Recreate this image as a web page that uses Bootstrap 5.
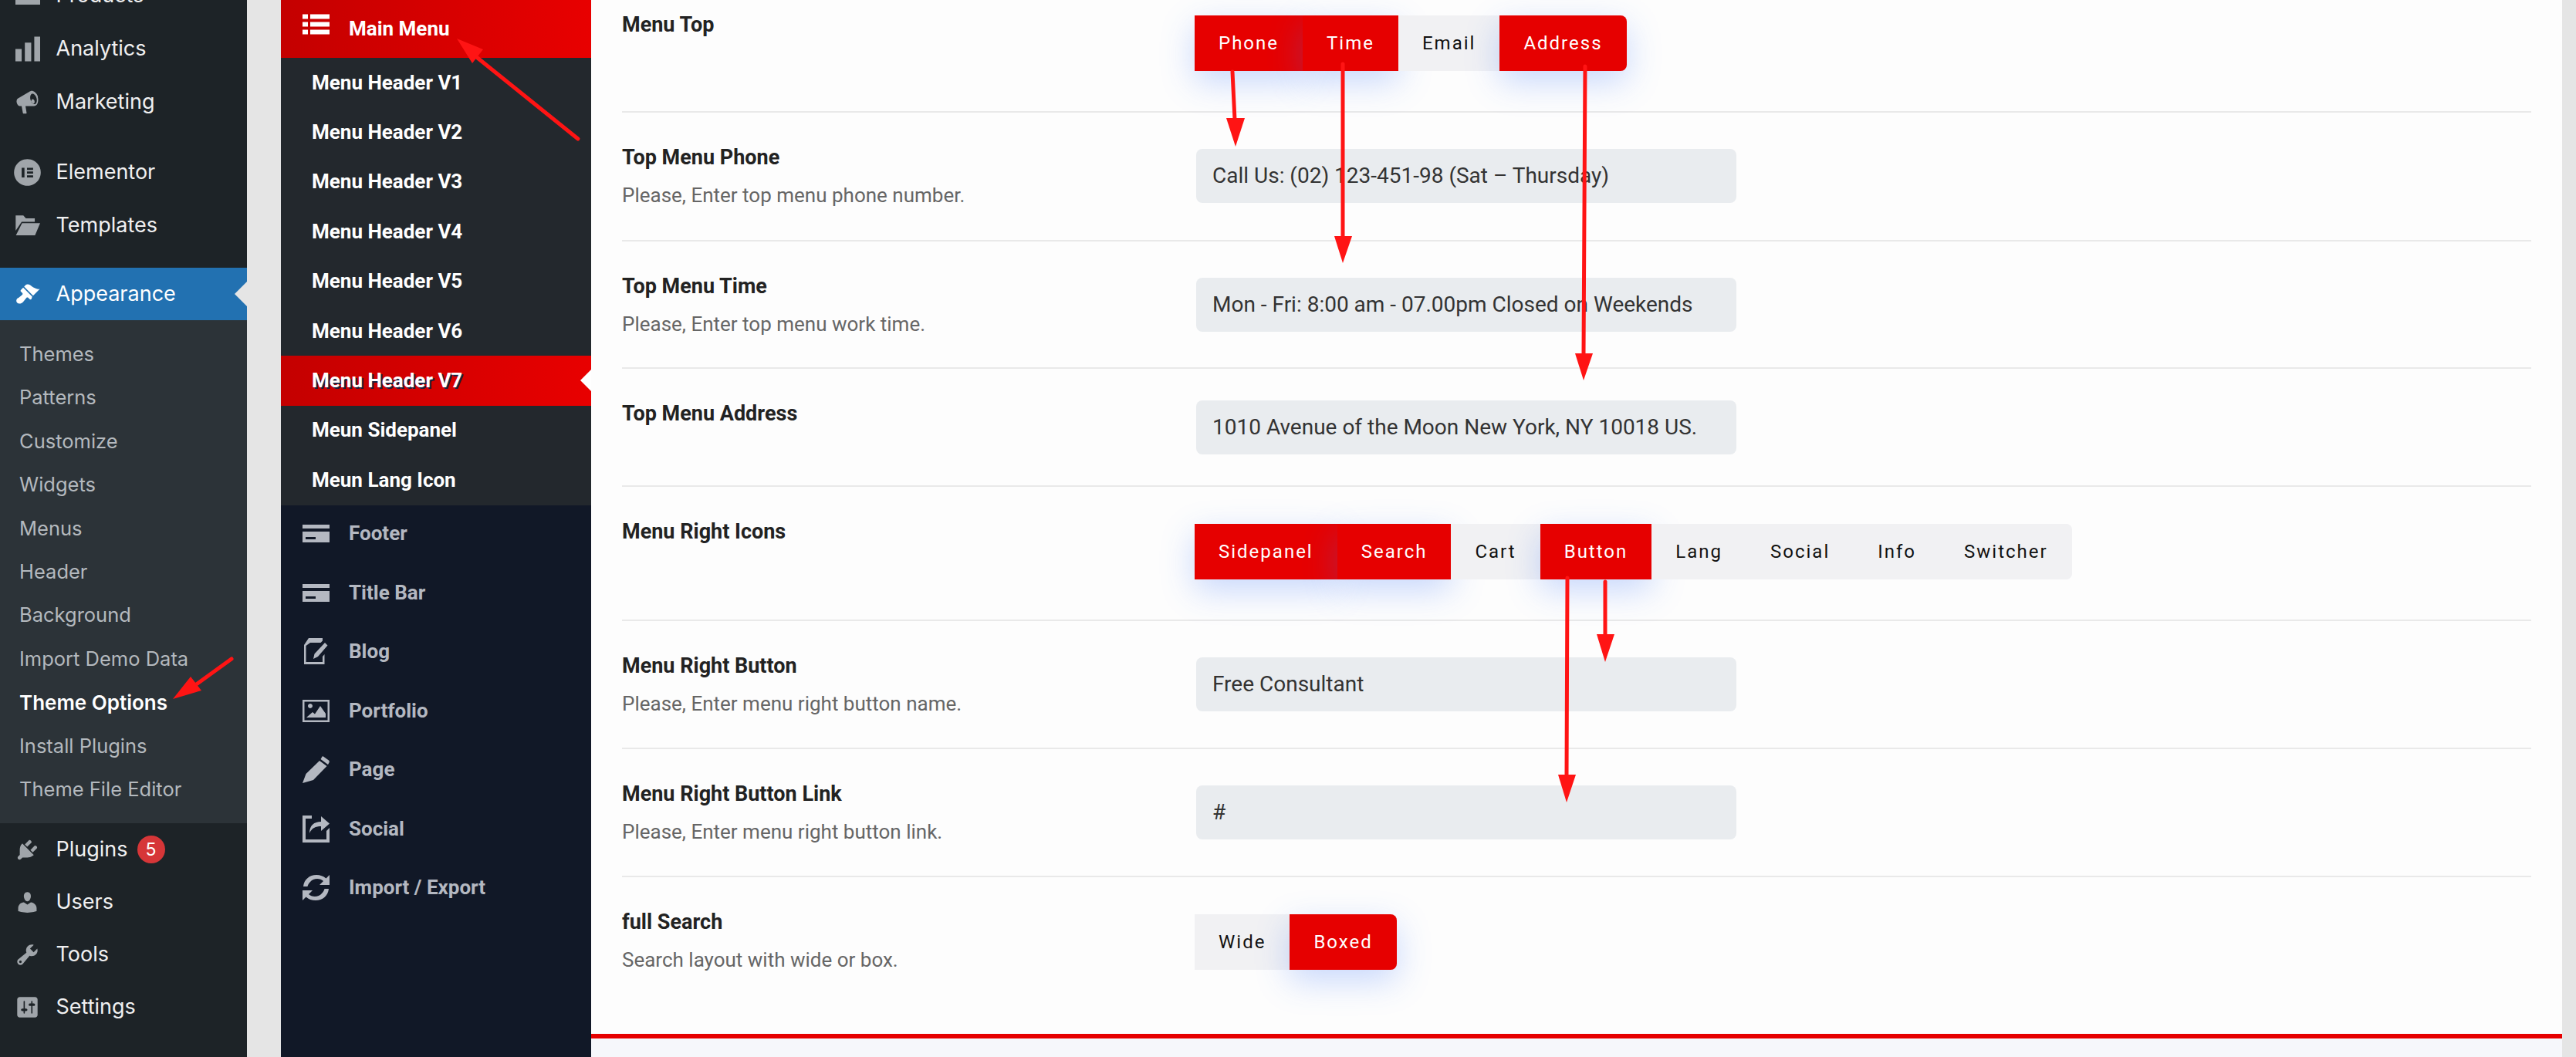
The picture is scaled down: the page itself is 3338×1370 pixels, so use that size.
<!DOCTYPE html>
<html lang="en">
<head>
<meta charset="utf-8">
<title>Theme Options</title>
<link href="https://cdn.jsdelivr.net/npm/bootstrap@5.3.0/dist/css/bootstrap.min.css" rel="stylesheet">
<style>
html,body{height:1370px;overflow:hidden;margin:0}
body{background:#e5e5e5;font-family:Roboto,"Liberation Sans",sans-serif;position:relative}
.shell{height:1370px;overflow:hidden}
.wp-side{width:320px;background:#1d2327;flex:none;font-family:Inter,"Liberation Sans",sans-serif}
.wp-list{margin-top:-40px}
.wp-item{height:69px;padding-left:19px;color:#f0f0f1;font-size:27px;white-space:nowrap;position:relative}
.wp-low{height:68px}
.wp-item svg{width:33px;height:33px;margin-right:20.500px;flex:none;fill:#a0a5aa;overflow:visible}
.sep-a{margin-top:22px}
.sep-b{margin-top:20px}
.wp-cur{background:#2271b1;color:#fff;height:68px}
.wp-cur svg{fill:#fff}
.wp-cur::after{content:"";position:absolute;right:0;top:18px;border:16px solid transparent;border-right-color:#e5e5e5;border-left:0}
.wp-sub{background:#2c3338;padding:16px 0 16px}
.wp-sub div{height:56.4px;padding-left:25px;font-size:25.500px;color:#b4b9be;display:flex;align-items:center}
.wp-sub .sub-on{color:#fff;font-weight:600;font-size:26px}
.wp-count{width:36px;height:36px;border-radius:50%;background:#d63638;color:#fff;font-size:23px;margin-left:12px}
.pn{width:402px;margin-left:44px;background:#111827;flex:none}
.pn-main{height:75px;padding-left:28px;color:#fff;font-weight:700;font-size:26px;background:linear-gradient(90deg,#c40000,#e80000)}
.pn-main svg{margin-bottom:12px}
.pn svg{width:35px;height:35px;margin-right:25px;flex:none}
.pn-sub{background:#23282d}
.pn-sub div{height:64.4px;padding-left:40px;color:#fff;font-weight:700;font-size:26px;display:flex;align-items:center;position:relative}
.pn-sub .pn-on{background:linear-gradient(90deg,#c40000,#e80000);text-shadow:2px 2px 0 #1a2340}
.pn-on::after{content:"";position:absolute;right:0;top:18px;border:14px solid transparent;border-right-color:#fff;border-left:0}
.pn-row{height:76.5px;padding:0 0 2px 28px;color:#b4b8c1;font-weight:700;font-size:26px}
.pn-row svg{fill:#b4b8c1}
.main{width:2554px;background:#f6f7fb;flex:none;height:1370px}
.sheet{background:#fdfdfd;padding:0 40px;margin-top:-26px}
.foot-line{height:6px;background:#e60000}
.opt{border-bottom:2px solid #e9e9e9}
.opt:last-child{border-bottom:0}
.opt-label{width:742px;flex:none;padding-top:35px}
.opt-label h6{font-family:Roboto,sans-serif;font-size:27px;font-weight:700;color:#222;line-height:34px;margin:6px 0 0}
.opt-label p{font-size:26px;color:#666;line-height:32px;margin:15.500px 0 0}
.pad-a{height:172px}
.pad-b{height:167px}
.pad-c{height:165px}
.pad-d{height:153px}
.pad-e{height:174px}
.pad-f{height:166px}
.pad-g{height:203px}
.field{width:700px;height:70px;margin:47px 0 0 2px;background:#e9ecef;border:0;border-radius:8px;padding:0 21px;font-size:28px;color:#333;display:flex;align-items:center;white-space:nowrap;overflow:hidden}
.field-up{margin-top:41px}
.seg{margin-top:48px;height:72px;background:#f1f1f3;border-radius:0 8px 8px 0}
.seg-top{margin-top:46px}
.seg .btn{border:0;border-radius:0;height:72px;padding:0 31px;font-family:Roboto,sans-serif;font-size:24px;letter-spacing:2px;color:#111;background:#f1f1f3;display:flex;align-items:center}
.seg .btn.on{background:#e60000;color:#fff;box-shadow:0 14px 44px rgba(60,120,250,.28)}
.seg .btn:last-child{border-radius:0 8px 8px 0}
.strip{width:18px;flex:none}
.marks{position:absolute;left:0;top:0;width:3338px;height:1370px;pointer-events:none}
.marks line{stroke:#ff1414;stroke-width:5;stroke-linecap:round}
.marks polygon{fill:#ff1414}
</style>
</head>
<body>
<div class="shell d-flex">
  <aside class="wp-side">
    <div class="wp-list">
      <div class="wp-item d-flex align-items-center"><svg viewBox="0 0 20 20"><path d="M.6 3h19.400v14H.6z"/></svg>Products</div>
      <div class="wp-item d-flex align-items-center"><svg viewBox="0 0 20 20"><path d="M.6 10h4.900v9.700H.6zM8 5h5v14.700H8zM15.400.3H20v19.400h-4.600z"/></svg>Analytics</div>
      <div class="wp-item d-flex align-items-center"><svg viewBox="0 0 20 20"><path d="M18.150 5.940c.46 1.620.38 3.220-.02 4.480-.42 1.280-1.260 2.180-2.300 2.480-.16.06-.26.06-.4.06-.06.02-.12.02-.18.02-.06.02-.14.02-.22.02H8.500l.9 5.500c.02.140-.06.26-.14.34-.08.10-.24.16-.34.16H6.950c-.1 0-.26-.06-.34-.16-.08-.08-.16-.2-.14-.34l-1-5.500H4.250c-.5.06-1.080-.18-1.540-.62s-.88-1.080-1.060-1.880c-.24-.8-.2-1.560-.02-2.200.18-.62.58-1.080 1.060-1.300l9-5.400c.1-.06.18-.1.24-.16.06-.04.14-.08.24-.12.16-.08.28-.12.5-.18 1.040-.3 2.240.1 3.260.94 1.040.82 1.960 2.100 2.420 3.780zm-2.200 5.560c1.280-.38 1.840-2.500 1.240-4.740-.62-2.200-2.200-3.780-3.480-3.400-1.300.36-1.860 2.480-1.260 4.700.62 2.240 2.200 3.800 3.500 3.440zm-.9-3.500a1.300 1.800-15 1 1-.01-.01z" fill-rule="evenodd"/></svg>Marketing</div>
      <div class="wp-item d-flex align-items-center sep-a"><svg viewBox="0 0 20 20"><path fill-rule="evenodd" d="M10 -.5a10.500 10.500 0 1 1-.001 0zM5.500 6.300v7.600h2.200V6.300zM9.700 6.300v1.700h4.800V6.300zM9.700 9.200v1.700h4.800V9.200zM9.700 12.200v1.700h4.800v-1.700z"/></svg>Elementor</div>
      <div class="wp-item d-flex align-items-center"><svg viewBox="0 0 20 20"><path d="M.8 2h6l2 2.300h7V7H5.500L.8 14zM5.800 8H20l-4 9.500H1z"/></svg>Templates</div>
      <div class="wp-item wp-cur d-flex align-items-center sep-b"><svg viewBox="0 0 20 20"><path d="M14.480 11.060L7.410 3.990l1.500-1.500c.5-.56 2.300-.47 3.510.32 1.210.8 1.430 1.280 2.910 2.100 1.180.64 2.450 1.260 4.450.85zm-.71.71L6.700 4.700 4.930 6.470c-.39.39-.39 1.020 0 1.410l1.060 1.060c.39.39.39 1.030 0 1.420-.6.6-1.430 1.110-2.210 1.690-.35.26-.7.53-1.010.84C1.430 13.230.77 15.400 2 16.640c1.240 1.230 3.400.58 4.730-.74.31-.31.58-.66.84-1.010.58-.78 1.090-1.610 1.690-2.210.39-.39 1.030-.39 1.420 0l1.060 1.060c.39.39 1.020.39 1.410 0z"/></svg>Appearance</div>
      <div class="wp-sub">
        <div>Themes</div><div>Patterns</div><div>Customize</div><div>Widgets</div><div>Menus</div><div>Header</div><div>Background</div><div>Import Demo Data</div><div class="sub-on">Theme Options</div><div>Install Plugins</div><div>Theme File Editor</div>
      </div>
      <div class="wp-item wp-low d-flex align-items-center"><svg viewBox="0 0 20 20"><path d="M13.110 4.360L9.870 7.600 8 5.730l3.240-3.240c.35-.34 1.050-.2 1.560.32.52.51.66 1.210.31 1.550zm-8 1.770l.91-1.120 9.010 9.010-1.190.84c-.71.71-2.630 1.160-3.820 1.160H6.140L4.900 17.260c-.59.59-1.540.59-2.120 0-.59-.58-.59-1.530 0-2.120l1.240-1.240v-3.880c0-1.130.4-3.190 1.090-3.890zm7.260 3.970l3.240-3.240c.34-.35 1.040-.21 1.550.31.52.51.66 1.210.31 1.550l-3.240 3.250z"/></svg>Plugins<span class="wp-count d-flex align-items-center justify-content-center">5</span></div>
      <div class="wp-item wp-low d-flex align-items-center"><svg viewBox="0 0 20 20"><path d="M10 9.250c-2.270 0-2.730-3.440-2.730-3.440C7 4.020 7.820 2 9.970 2c2.160 0 2.980 2.020 2.710 3.810 0 0-.41 3.440-2.680 3.440zm0 2.570L12.720 10c2.390 0 4.520 2.330 4.520 4.530v2.490s-3.650 1.130-7.240 1.130c-3.650 0-7.240-1.130-7.240-1.130v-2.490c0-2.250 1.940-4.480 4.470-4.480z"/></svg>Users</div>
      <div class="wp-item wp-low d-flex align-items-center"><svg viewBox="0 0 20 20"><path d="M16.680 9.770c-1.340 1.340-3.300 1.670-4.950.99l-5.410 6.520c-.99.99-2.590.99-3.580 0s-.99-2.590 0-3.570l6.520-5.420c-.68-1.650-.35-3.610.99-4.950 1.280-1.280 3.120-1.620 4.720-1.060l-2.890 2.890 2.820 2.820 2.860-2.870c.53 1.580.18 3.390-1.080 4.650zM3.810 16.210c.4.39 1.040.39 1.430 0 .4-.4.4-1.040 0-1.430-.39-.4-1.030-.4-1.430 0-.39.39-.39 1.030 0 1.430z"/></svg>Tools</div>
      <div class="wp-item wp-low d-flex align-items-center"><svg viewBox="0 0 20 20"><path d="M18 16V4c0-1.100-.9-2-2-2H4c-1.100 0-2 .9-2 2v12c0 1.100.9 2 2 2h12c1.100 0 2-.9 2-2zM8 11h1c.55 0 1 .45 1 1s-.45 1-1 1H8v1.500c0 .28-.22.5-.5.5s-.5-.22-.5-.5V13H6c-.55 0-1-.45-1-1s.45-1 1-1h1V5.500c0-.28.22-.5.5-.5s.5.22.5.5V11zm5-2h-1c-.55 0-1-.45-1-1s.45-1 1-1h1V5.500c0-.28.22-.5.5-.5s.5.22.5.5V7h1c.55 0 1 .45 1 1s-.45 1-1 1h-1v5.500c0 .28-.22.5-.5.5s-.5-.22-.5-.5V9z"/></svg>Settings</div>
    </div>
  </aside>

  <nav class="pn">
    <div class="pn-main d-flex align-items-center"><svg viewBox="0 0 35 26" fill="#fff"><path d="M0 0h7v6H0zM10 0h25v6H10zM0 10h7v6H0zM10 10h25v6H10zM0 20h7v6H0zM10 20h25v6H10z"/></svg>Main Menu</div>
    <div class="pn-sub">
      <div>Menu Header V1</div><div>Menu Header V2</div><div>Menu Header V3</div><div>Menu Header V4</div><div>Menu Header V5</div><div>Menu Header V6</div><div class="pn-on">Menu Header V7</div><div>Meun Sidepanel</div><div>Meun Lang Icon</div>
    </div>
    <div class="pn-row d-flex align-items-center"><svg viewBox="0 0 35 35"><path fill-rule="evenodd" d="M0 6h35v5H0zM0 15h35v14H0zM4 22v3h13v-3z"/></svg>Footer</div>
    <div class="pn-row d-flex align-items-center"><svg viewBox="0 0 35 35"><path fill-rule="evenodd" d="M0 6h35v5H0zM0 15h35v14H0zM4 22v3h13v-3z"/></svg>Title Bar</div>
    <div class="pn-row d-flex align-items-center"><svg viewBox="0 0 35 35"><path fill-rule="evenodd" d="M8 0h18v3.500l-2.500 2.500H10L4.500 10v21H26v-7l2.500-3v13H2V9zM29 6l3.500 3.500L20 24l-6 3 1.500-6.500z"/></svg>Blog</div>
    <div class="pn-row d-flex align-items-center"><svg viewBox="0 0 35 35"><path fill-rule="evenodd" d="M0 3h35v29H0zM2.500 5.500v24h30v-24zM10 8a3 3 0 1 1-.01 0zM5 26l8-7 3 2.500L23 11l7 10v5z"/></svg>Portfolio</div>
    <div class="pn-row d-flex align-items-center"><svg viewBox="0 0 35 35"><path d="M27 .5l7 5c1 .8 1 2 .4 3L33 11 23.500 4 25 1.500C25.500.5 26 0 27 .5zM22 6l9.500 7L14 31 0 35l4.500-12z"/></svg>Page</div>
    <div class="pn-row d-flex align-items-center"><svg viewBox="0 0 35 35"><path fill-rule="evenodd" d="M0 0h12v4H4v27h27V20l4-4v19H0zM24 1l11 9.500L24 20v-6c-7 0-12 2-15 9 0-10 6-15 15-15z"/></svg>Social</div>
    <div class="pn-row d-flex align-items-center"><svg viewBox="0 0 35 35"><path d="M35 1v13H22l5-5C23 5 14 5 10 10c-2 2-3 4-3.500 6H1C2 7 9 1 18 1c5 0 9 1.500 12.500 4.500zM0 34V21h13l-5 5c4 4 13 4 17-1 2-2 3-4 3.500-6H34c-1 9-8 15-17 15-5 0-9-1.500-12.500-4.500z"/></svg>Import / Export</div>
  </nav>

  <main class="main">
    <div class="sheet">
      <section class="opt pad-a d-flex"><div class="opt-label"><h6>Menu Top</h6></div>
        <div class="seg seg-top d-inline-flex align-self-start"><a class="btn on">Phone</a><a class="btn on">Time</a><a class="btn">Email</a><a class="btn on">Address</a></div></section>
      <section class="opt pad-b d-flex"><div class="opt-label"><h6>Top Menu Phone</h6><p>Please, Enter top menu phone number.</p></div><div class="field form-control">Call Us: (02) 123-451-98 (Sat – Thursday)</div></section>
      <section class="opt pad-c d-flex"><div class="opt-label"><h6>Top Menu Time</h6><p>Please, Enter top menu work time.</p></div><div class="field form-control">Mon - Fri: 8:00 am - 07.00pm Closed on Weekends</div></section>
      <section class="opt pad-d d-flex"><div class="opt-label"><h6>Top Menu Address</h6></div><div class="field field-up form-control">1010 Avenue of the Moon New York, NY 10018 US.</div></section>
      <section class="opt pad-e d-flex"><div class="opt-label"><h6>Menu Right Icons</h6></div>
        <div class="seg d-inline-flex align-self-start"><a class="btn on">Sidepanel</a><a class="btn on">Search</a><a class="btn">Cart</a><a class="btn on">Button</a><a class="btn">Lang</a><a class="btn">Social</a><a class="btn">Info</a><a class="btn">Switcher</a></div></section>
      <section class="opt pad-f d-flex"><div class="opt-label"><h6>Menu Right Button</h6><p>Please, Enter menu right button name.</p></div><div class="field form-control">Free Consultant</div></section>
      <section class="opt pad-f d-flex"><div class="opt-label"><h6>Menu Right Button Link</h6><p>Please, Enter menu right button link.</p></div><div class="field form-control">#</div></section>
      <section class="opt pad-g d-flex"><div class="opt-label"><h6>full Search</h6><p>Search layout with wide or box.</p></div>
        <div class="seg d-inline-flex align-self-start"><a class="btn">Wide</a><a class="btn on">Boxed</a></div></section>
    </div>
    <div class="foot-line"></div>
  </main>
  <div class="strip"></div>
</div>

<svg class="marks" viewBox="0 0 3338 1370">
  <line x1="749" y1="180" x2="615" y2="72"/><polygon points="592,50 626,64 612,82"/>
  <line x1="300" y1="854" x2="253" y2="888"/><polygon points="224,906 247,877 261,895"/>
  <line x1="1597" y1="93" x2="1600" y2="155"/><polygon points="1601,190 1589,153 1613,153"/>
  <line x1="1740" y1="83" x2="1740" y2="308"/><polygon points="1740,341 1729,306 1752,306"/>
  <line x1="2054" y1="86" x2="2052" y2="460"/><polygon points="2052,493 2041,458 2064,458"/>
  <line x1="2031" y1="749" x2="2030" y2="1006"/><polygon points="2030,1040 2019,1004 2042,1004"/>
  <line x1="2080" y1="754" x2="2080" y2="824"/><polygon points="2080,858 2069,822 2092,822"/>
</svg>
<script src="https://cdn.jsdelivr.net/npm/bootstrap@5.3.0/dist/js/bootstrap.bundle.min.js"></script>
</body>
</html>
